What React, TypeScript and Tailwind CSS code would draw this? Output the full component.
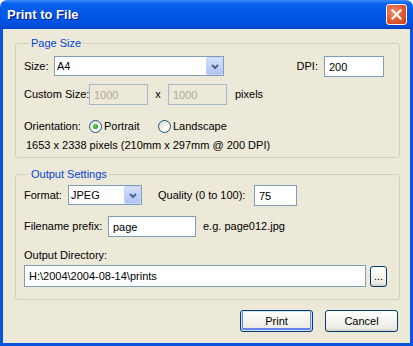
import React from 'react';

function ComboArrow() {
  return (
    <div className="h-full w-[17px] rounded-[2px] border border-[#C3D3FD] bg-[linear-gradient(180deg,#D4E0FD_0%,#BCCDF8_60%,#B0C3F5_100%)] flex items-center justify-center">
      <svg width="8" height="5" viewBox="0 0 8 5">
        <path d="M1 1 L4 4 L7 1" fill="none" stroke="#4D6185" strokeWidth="2" />
      </svg>
    </div>
  );
}

function Combo({ value, width }: { value: string; width: string }) {
  return (
    <div className={`${width} shrink-0 h-[20px] self-start border border-[#7F9DB9] bg-white flex items-stretch`}>
      <div className="flex-1 pl-[2px] flex items-center">{value}</div>
      <ComboArrow />
    </div>
  );
}

function TextBox({ value, width, disabled }: { value: string; width: string; disabled?: boolean }) {
  return (
    <input
      readOnly
      disabled={disabled}
      defaultValue={value}
      className={`${width} shrink-0 h-[21px] pl-[4px] outline-none border ${
        disabled
          ? 'border-[#A5B7CC] bg-[#ECE9D8] text-[#ACA899]'
          : 'border-[#7F9DB9] bg-white text-black'
      }`}
    />
  );
}

function Radio({ checked }: { checked?: boolean }) {
  return (
    <div className="w-[13px] h-[13px] shrink-0 rounded-full border border-[#1C5180] bg-[linear-gradient(135deg,#DCD9CD_0%,#FFFFFF_70%)] flex items-center justify-center">
      {checked && (
        <div className="w-[5px] h-[5px] rounded-full bg-[radial-gradient(circle_at_40%_40%,#5EE05E_0%,#21A121_70%)]" />
      )}
    </div>
  );
}

function XPButton({ label, isDefault }: { label: string; isDefault?: boolean }) {
  return (
    <button
      className={`w-[73px] h-[22px] rounded-[3px] border border-[#003C74] bg-[linear-gradient(180deg,#FFFFFF_0%,#F4F3EE_50%,#ECEBE6_85%,#D6D0C5_100%)] ${
        isDefault ? 'shadow-[inset_0_0_0_1px_#CEE7FF,inset_0_-1px_0_2px_#6982EE]' : ''
      }`}
    >
      {label}
    </button>
  );
}

export default function App() {
  return (
    <div className="w-[413px] h-[346px] flex flex-col font-['Liberation_Sans',Arial,sans-serif] text-[11px] leading-[13px] text-black select-none whitespace-nowrap">
      {/* title bar */}
      <div className="h-[29px] rounded-t-[7px] bg-[linear-gradient(180deg,#3D8CF5_0%,#0A62EE_12%,#0058E6_40%,#0055E5_70%,#004BD6_92%,#0042C2_100%)] flex items-center pl-[7px] pr-[6px]">
        <span className="text-white font-bold text-[13px] [text-shadow:1px_1px_#0A1883]">
          Print to File
        </span>
        <div className="ml-auto w-[21px] h-[21px] rounded-[3px] border border-white bg-[radial-gradient(circle_at_35%_35%,#F08A66_0%,#E0582F_55%,#C63C14_100%)] flex items-center justify-center">
          <svg width="11" height="11" viewBox="0 0 11 11">
            <path d="M1.5 1.5 L9.5 9.5 M9.5 1.5 L1.5 9.5" stroke="white" strokeWidth="2.2" strokeLinecap="square" />
          </svg>
        </div>
      </div>

      {/* client area */}
      <div className="flex-1 bg-[#ECE9D8] border-x-[3px] border-b-[3px] border-[#0855DD] flex flex-col pl-[12px] pr-[10px]">
        <fieldset className="mt-[8px] border border-[#D0D0BF] rounded-[3px] px-[8px] pb-[5px]">
          <legend className="ml-[5px] px-[2px] text-[#0046D5]">Page Size</legend>

          <div className="mt-[6px] h-[21px] flex items-center">
            <span className="w-[30px] shrink-0">Size:</span>
            <Combo value="A4" width="w-[170px]" />
            <span className="ml-auto mr-[6px]">DPI:</span>
            <div className="mr-[7px]">
              <TextBox value="200" width="w-[60px]" />
            </div>
          </div>

          <div className="mt-[7px] h-[21px] flex items-center">
            <span className="w-[65px] shrink-0">Custom Size:</span>
            <TextBox value="1000" width="w-[59px]" disabled />
            <span className="w-[20px] shrink-0 text-center">x</span>
            <TextBox value="1000" width="w-[59px]" disabled />
            <span className="ml-[8px]">pixels</span>
          </div>

          <div className="mt-[15px] h-[13px] flex items-center">
            <span className="w-[65px] shrink-0">Orientation:</span>
            <div className="w-[69px] shrink-0 flex items-center">
              <Radio checked />
              <span className="ml-[2px]">Portrait</span>
            </div>
            <div className="flex items-center">
              <Radio />
              <span className="ml-[2px]">Landscape</span>
            </div>
          </div>

          <div className="mt-[6px] pl-[2px]">1653 x 2338 pixels (210mm x 297mm @ 200 DPI)</div>
        </fieldset>

        <fieldset className="mt-[10px] border border-[#D0D0BF] rounded-[3px] px-[8px] pb-[12px]">
          <legend className="ml-[5px] px-[2px] text-[#0046D5]">Output Settings</legend>

          <div className="mt-[4px] h-[21px] flex items-center">
            <span className="w-[44px] shrink-0">Format:</span>
            <Combo value="JPEG" width="w-[74px]" />
            <span className="ml-[16px] w-[96px] shrink-0">Quality (0 to 100):</span>
            <TextBox value="75" width="w-[43px]" />
          </div>

          <div className="mt-[10px] h-[21px] flex items-center">
            <span className="w-[84px] shrink-0">Filename prefix:</span>
            <TextBox value="page" width="w-[88px]" />
            <span className="ml-[7px]">e.g. page012.jpg</span>
          </div>

          <div className="mt-[12px]">Output Directory:</div>

          <div className="mt-[3px] h-[22px] flex items-center">
            <input
              readOnly
              defaultValue="H:\2004\2004-08-14\prints"
              className="w-[342px] shrink-0 h-[22px] pl-[4px] outline-none border border-[#7F9DB9] bg-white"
            />
            <button className="ml-[4px] w-[17px] h-[21px] shrink-0 rounded-[3px] border border-[#003C74] bg-[linear-gradient(180deg,#FFFFFF_0%,#F4F3EE_50%,#ECEBE6_85%,#D6D0C5_100%)] flex items-end justify-center pb-[3px]">
              ...
            </button>
          </div>
        </fieldset>

        <div className="mt-[10px] flex justify-end gap-[12px] pr-[2px]">
          <XPButton label="Print" isDefault />
          <XPButton label="Cancel" />
        </div>
      </div>
    </div>
  );
}
